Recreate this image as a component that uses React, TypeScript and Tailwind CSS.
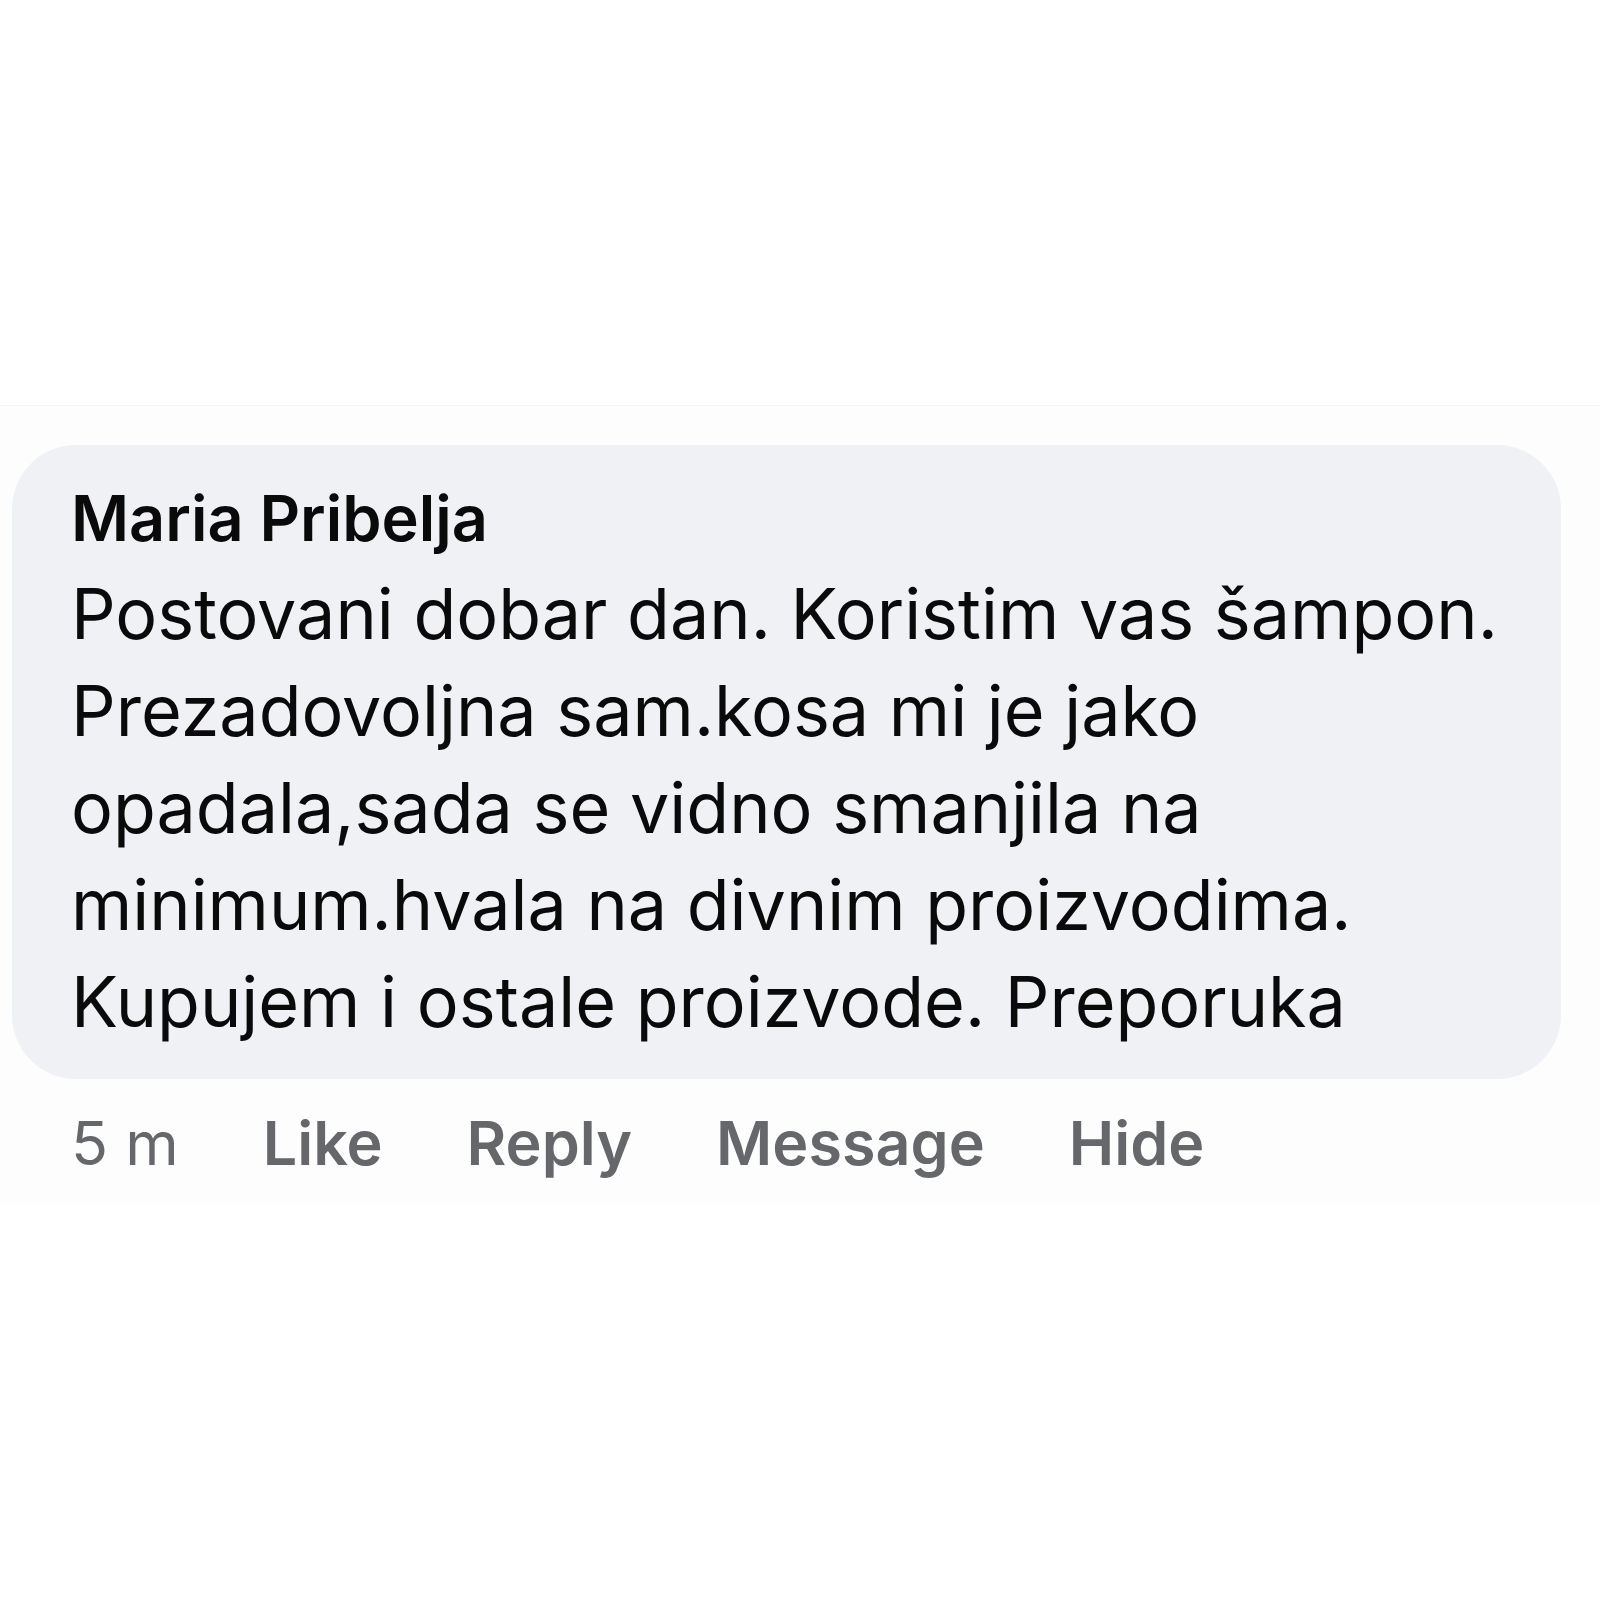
export default function App() {
  return (
    <div className="w-[1600px] h-[1600px] bg-white flex flex-col pt-[405px] font-['Inter','Liberation_Sans',sans-serif]">
      <div className="border-t border-[#f4f4f4] bg-[#fdfdfd] pt-[39px] pb-[22px]">
        <div className="ml-[12px] w-[1549px] h-[634px] rounded-[64px] bg-[#f0f1f5] pl-[59px] pt-[38px] text-[#0a0a0a]">
          <div className="text-[63px] font-semibold leading-[70px]">Maria Pribelja</div>
          <div className="text-[70px] leading-[97px] mt-[12px]">
            Postovani dobar dan. Koristim vas šampon.
            <br />
            Prezadovoljna sam.kosa mi je jako
            <br />
            opadala,sada se vidno smanjila na
            <br />
            minimum.hvala na divnim proizvodima.
            <br />
            Kupujem i ostale proizvode. Preporuka
          </div>
        </div>
        <div className="ml-[71px] mt-[24px] flex gap-[84px] text-[61px] leading-[80px] text-[#65676b]">
          <span>5 m</span>
          <span className="font-semibold">Like</span>
          <span className="font-semibold">Reply</span>
          <span className="font-semibold">Message</span>
          <span className="font-semibold">Hide</span>
        </div>
      </div>
    </div>
  );
}
